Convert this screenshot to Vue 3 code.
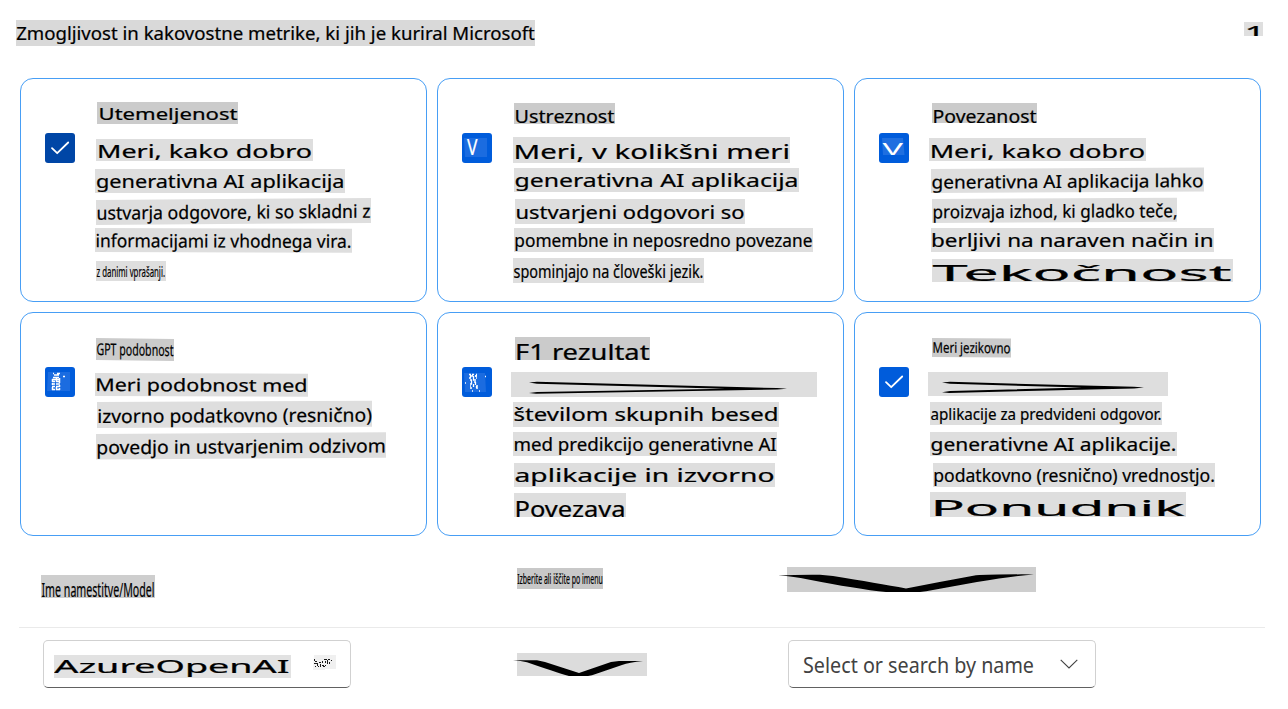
<script setup>
import { h } from 'vue'

// One highlighted line of text: b = [left, top, right, bottom], t = [start, end, baseline], s = size, dy = slant
const Strip = ({ l, ox = 0, oy = 0 }) => {
  const [x, y, r, b] = l.b
  const w = r - x
  const hgt = b - y
  const dy = l.dy || 0
  const kids = [h('path', { d: `M0 0H${w}V${hgt}H0Z`, fill: l.bg || '#dedede' })]
  if (l.text) {
    kids.push(h('text', {
      x: l.t[0] - x + 0.5, y: l.t[2] - y, 'font-size': l.s, textLength: l.t[1] - l.t[0] - 1,
      lengthAdjust: 'spacingAndGlyphs', fill: '#000', stroke: '#000', 'stroke-width': 0.22, 'font-family': "'Noto Sans', sans-serif"
    }, l.text))
  }
  if (l.d) kids.push(h('path', { d: l.d, fill: '#000' }))
  if (l.wedge) {
    const [x0, x1, ya, yb, yc] = l.wedge
    kids.push(h('path', {
      d: `M${x0} ${ya - 0.4}L${x0 + 8} ${ya - 1}L${x1 - 50} ${yb - 1.8}L${x1 - 10} ${yb - 0.8}L${x1} ${yb}L${x1 - 10} ${yb + 0.8}L${x0 + 7} ${yc + 1}L${x0} ${yc + 0.2}L${x0 + 8} ${yc - 0.9}L${x1 - 62} ${yb}L${x0 + 8} ${ya + 1}Z`,
      fill: '#000'
    }))
  }
  return h('svg', {
    class: ['strip', { loose: !l.clip }], width: w, height: hgt, viewBox: `0 0 ${w} ${hgt}`,
    style: { marginLeft: `${x - ox}px`, marginTop: `${y - oy}px` }
  }, [h('g', { transform: `skewY(${(Math.atan(dy / w) * 180) / Math.PI})` }, kids)])
}

const T = '#cbcbcb'
const cards = [
  { ox: 96, oy: 79, icon: 'check', dark: true, lines: [
    { b: [97, 102, 238, 124], t: [98, 238, 120], s: 16.8, text: 'Utemeljenost', bg: T },
    { b: [96, 139, 313, 161], t: [96.5, 312.5, 158.2], s: 17.7, text: 'Meri, kako dobro' },
    { b: [95, 169, 345, 193], t: [95.5, 345, 188.2], s: 18.4, text: 'generativna AI aplikacija' },
    { b: [96, 200, 371, 225], t: [96, 371, 219.7], s: 18.4, text: 'ustvarja odgovore, ki so skladni z', dy: -2 },
    { b: [95, 228, 352, 252], t: [95, 352, 247.2], s: 18.2, text: 'informacijami iz vhodnega vira.', dy: 0.7 },
    { b: [96, 261, 166, 281], t: [96, 165.5, 277], s: 14.5, text: 'z danimi vprašanji.' }
  ] },
  { ox: 513, oy: 79, icon: 'narrowV', lines: [
    { b: [514, 103, 615, 124], t: [514, 615, 123], s: 18.4, text: 'Ustreznost', bg: T },
    { b: [513, 137, 790, 163], t: [513, 790.5, 159.3], s: 20, text: 'Meri, v kolikšni meri' },
    { b: [514, 168, 799, 192], t: [514, 799, 187.2], s: 18.4, text: 'generativna AI aplikacija' },
    { b: [515, 199, 745, 224], t: [515, 745, 219], s: 18.6, text: 'ustvarjeni odgovori so' },
    { b: [514, 228, 813, 252], t: [513.8, 813, 247.2], s: 18, text: 'pomembne in neposredno povezane' },
    { b: [513, 258, 704, 283], t: [513, 704, 277.8], s: 18, text: 'spominjajo na človeški jezik.' }
  ] },
  { ox: 930, oy: 79, icon: 'wideV', lines: [
    { b: [932, 103, 1037, 123], t: [932, 1037, 122.8], s: 18.2, text: 'Povezanost', bg: T },
    { b: [929, 138, 1146, 161], t: [929.2, 1145.5, 158.2], s: 18, text: 'Meri, kako dobro' },
    { b: [931, 169, 1204, 193], t: [931, 1204, 188.6], s: 18, text: 'generativna AI aplikacija lahko', dy: -1.5 },
    { b: [932, 199, 1177, 223], t: [932, 1178, 218.4], s: 18, text: 'proizvaja izhod, ki gladko teče,', dy: -1.2 },
    { b: [931, 228, 1214, 252], t: [930.5, 1214, 247.2], s: 18.2, text: 'berljivi na naraven način in' },
    { b: [932, 259, 1233, 282], t: [932, 1232, 281.4], s: 21.4, text: 'Tekočnost', clip: true }
  ] },
  { ox: 96, oy: 313, icon: 'dense', lines: [
    { b: [96, 338, 174, 360], t: [96, 174, 355], s: 16.3, text: 'GPT podobnost', bg: T, dy: 1 },
    { b: [95, 373, 308, 396], t: [94.8, 308, 391], s: 17.4, text: 'Meri podobnost med', dy: 0.8 },
    { b: [97, 402, 372, 428], t: [96.7, 372.5, 423], s: 18.8, text: 'izvorno podatkovno (resnično)', dy: -1.3 },
    { b: [96, 433.5, 386, 459], t: [95.8, 386.3, 453.7], s: 18.6, text: 'povedjo in ustvarjenim odzivom', dy: -1.8 }
  ] },
  { ox: 513, oy: 313, icon: 'scatter', lines: [
    { b: [515, 337, 650, 360], t: [514.5, 650, 359.8], s: 21, text: 'F1 rezultat', bg: T, clip: true },
    { b: [511, 372, 817, 397], wedge: [18, 276, 10.8, 16.8, 20.8] },
    { b: [513, 402, 779, 427], t: [513, 779, 421.4], s: 18.2, text: 'številom skupnih besed' },
    { b: [513, 432, 777, 456], t: [512.9, 777.2, 451], s: 17.6, text: 'med predikcijo generativne AI' },
    { b: [514, 463, 775, 487], t: [514, 775, 482.2], s: 18, text: 'aplikacije in izvorno' },
    { b: [514, 493, 626, 517], t: [514, 626, 516.8], s: 21, text: 'Povezava', clip: true }
  ] },
  { ox: 930, oy: 313, icon: 'check', lines: [
    { b: [932, 338, 1011, 357], t: [932, 1011, 352.7], s: 14.6, text: 'Meri jezikovno', bg: T, dy: 0.6 },
    { b: [928, 372, 1168, 396], wedge: [14, 216, 10.8, 15.6, 20] },
    { b: [930, 402, 1162, 425], t: [930, 1162, 420.4], s: 17, text: 'aplikacije za predvideni odgovor.' },
    { b: [930, 432, 1177, 456], t: [930, 1177, 451], s: 17.4, text: 'generativne AI aplikacije.' },
    { b: [933, 463, 1215, 487], t: [932.7, 1215.5, 482.2], s: 18, text: 'podatkovno (resnično) vrednostjo.' },
    { b: [930, 492, 1186, 517], t: [930, 1185, 515.8], s: 21.8, text: 'Ponudnik', clip: true }
  ] }
]
cards.forEach((c) => {
  let y = c.oy
  c.lines.forEach((l) => { l.from = y; y = l.b[3] })
})

const heading = { b: [0, 0, 519, 26], t: [-0.3, 519.3, 20.4], s: 18.4, text: 'Zmogljivost in kakovostne metrike, ki jih je kuriral Microsoft', bg: '#d9d9d9' }
const count = { b: [0, 0, 19, 14], t: [0, 22, 18.2], s: 20, text: '1', bg: '#dfdfdf', clip: true }
const model = { b: [0, 0, 114, 23], t: [0, 114, 22.2], s: 20.5, text: 'Ime namestitve/Model', bg: '#cecece', clip: true }
const pick = { b: [0, 0, 86, 21], t: [-0.3, 86.3, 16.2], s: 14, text: 'Izberite ali iščite po imenu', bg: '#c8c8c8' }
const wide = { b: [0, 0, 249, 25], bg: '#cecece', d: 'M-9 8.5Q10 7.600 33 7.800L46 9Q90 16 119 21.500Q155 14.500 189 8.300Q205 7.200 247 7.400Q225 9 190 15L139 24.200L133 25H99Q70 22 20 12.200Q8 9.500 -9 8.500Z' }
const arrow = { b: [0, 0, 130, 23], bg: '#dcdcdc', d: 'M-4 7.2H20L28 9L62 20L94 9L102 8H126Q112 9.500 105 12L75 22.300L71 23H52Q38 19 10 9.200Q4 7.800 -4 7.200Z' }
const azure = { b: [0, 0, 237, 23], t: [-0.2, 236, 18.3], s: 17.5, text: 'AzureOpenAI', bg: '#e2e2e2', clip: true }
</script>

<template>
  <main class="page">
    <header class="head">
      <Strip :l="heading" />
      <Strip :l="count" />
    </header>
    <section class="grid">
      <article v-for="(c, i) in cards" :key="i" class="card">
        <div class="box" :class="{ dark: c.dark }">
          <svg width="30" height="30" viewBox="0 0 30 30">
            <path v-if="c.icon === 'check'" d="M7 15.2L12.2 20.2L23.2 9.5" fill="none" stroke="#fff" stroke-width="1.8" stroke-linecap="round" stroke-linejoin="round" />
            <template v-else-if="c.icon === 'narrowV'">
              <path d="M2 5H25V24H3Z" fill="#1b6ce0" />
              <text x="5" y="21.5" font-size="22" textLength="10.5" lengthAdjust="spacingAndGlyphs" fill="#fff" stroke="#fff" stroke-width="0.2">V</text>
            </template>
            <template v-else-if="c.icon === 'wideV'">
              <path d="M3 5H24L25.5 22H4Z" fill="#1f6fe0" />
              <text x="3.5" y="21.7" font-size="16.5" textLength="20.5" lengthAdjust="spacingAndGlyphs" fill="#fff">V</text>
            </template>
            <template v-else-if="c.icon === 'dense'">
              <path d="M3 5H25V24H2Z" fill="#1b6ce0" />
              <path d="M8 6.5h1m3 0h3M9 8h5m4 1.5h2M8 10.5h6M7 12.5h8M7 14.5h3m1 0h4M7 17h3m1 0h4M7 19.5h3m1 0h4M7 22.5h3m1 0h4M7.5 12v3M11.5 11v4M14.5 11v5M7.5 16v2M14.5 18v2M7.5 20v3M11.5 20v3M14.5 21v2" fill="none" stroke="#fff" stroke-width="1.5" />
            </template>
            <template v-else>
              <path d="M2 6H23L24 25H3Z" fill="#1b6ce0" />
              <path d="M7 7.5h2m1 0h2m2 0h1M8 9h3m2 0h2M7 11h2m2 0h1m2 0h1M8 13h2m1 0h3M9 15h1m2 0h2M8 17h2m3 0h1M8 19h1m2 0h1m2 0h2M8 21h2m4 0h2M10 24h1m6 0h1M3 16h1M23 9.5h1M8.5 8v3M11.5 9v4M14 8v2M9.5 13v4M13.5 15v3M11.5 17v3M14.5 19v2" fill="none" stroke="#fff" stroke-width="1.3" />
            </template>
          </svg>
        </div>
        <div class="lines">
          <Strip v-for="(l, k) in c.lines" :key="k" :l="l" :ox="c.ox" :oy="l.from" />
        </div>
      </article>
    </section>
    <section class="columns">
      <div class="c1"><Strip :l="model" /></div>
      <div class="c2"><Strip :l="pick" /></div>
      <div class="c3"><Strip :l="wide" /></div>
    </section>
    <section class="fields">
      <div class="field first">
        <Strip :l="azure" />
        <svg class="mark" width="23" height="15" viewBox="0 0 23 15">
          <path d="M1 0H23V14H12V15H0Z" fill="#f0f0f0" />
          <path d="M1.5 4v2M2 6.5h2M1 8.5h3M4.5 8v3M6 7.5h2M7.5 9v3M9.5 6v2M9 10.5h2M11 4.5h3M12.5 6v2M10 11.5h2M14.5 5v4M15 4.5h2M16.5 7v2M18 5.5h1M2 11.5h1M5 11.5h1M12.5 10v1" fill="none" stroke="#000" stroke-width="0.9" />
        </svg>
      </div>
      <div class="down"><Strip :l="arrow" /></div>
      <div class="field select">
        <svg width="231" height="30" viewBox="0 0 231 30">
          <text x="0" y="23" font-size="21" textLength="231" lengthAdjust="spacingAndGlyphs" fill="#424242">Select or search by name</text>
        </svg>
        <svg class="chev" width="18" height="10" viewBox="0 0 18 10">
          <path d="M0.7 0.8L9 9L17.3 0.8" fill="none" stroke="#424242" stroke-width="1.1" />
        </svg>
      </div>
    </section>
  </main>
</template>

<style>
body { background: #fff; }
.strip { display: block; flex: none; overflow: hidden; }
.strip.loose { overflow: visible; }
</style>

<style scoped>
.page { box-sizing: border-box; width: 1288px; height: 709px; overflow: hidden; font-family: 'Noto Sans', 'Open Sans', sans-serif; }
.head { display: flex; justify-content: space-between; height: 58px; padding: 20px 25px 0 16px; }
.head > :last-child { position: relative; top: 2px; }
.grid { display: grid; grid-template-columns: repeat(3, 407px); grid-auto-rows: 224px; gap: 10px; padding-left: 20px; }
.card { box-sizing: border-box; display: flex; border: 1px solid #479ef5; border-radius: 13px; }
.box { width: 30px; height: 30px; margin: 54px 21px 0 24px; flex: none; border-radius: 3px; background: #005cdb; overflow: hidden; }
.box.dark { background: #0046a6; }
.box svg { display: block; }
.lines { width: 300px; flex: none; display: flex; flex-direction: column; align-items: flex-start; }
.columns { box-sizing: border-box; display: grid; grid-template-columns: 476px 270px 1fr; width: 1246px; height: 92px; margin-left: 19px; padding: 31px 0 0 22px; border-bottom: 1px solid #eaeaea; }
.c1 { padding-top: 8px; }
.c2 { padding-top: 1px; }
.fields { display: flex; padding: 12px 0 0 43px; }
.field { box-sizing: border-box; display: flex; width: 308px; height: 48px; border: 1px solid #d1d1d1; border-bottom-color: #616161; border-radius: 5px; }
.first { padding: 14px 0 0 10px; }
.mark { margin-left: 22px; }
.down { width: 271px; padding: 13px 0 0 166px; box-sizing: content-box; }
.select { padding: 9px 0 0 14px; }
.chev { margin: 9px 0 0 26px; }
</style>
